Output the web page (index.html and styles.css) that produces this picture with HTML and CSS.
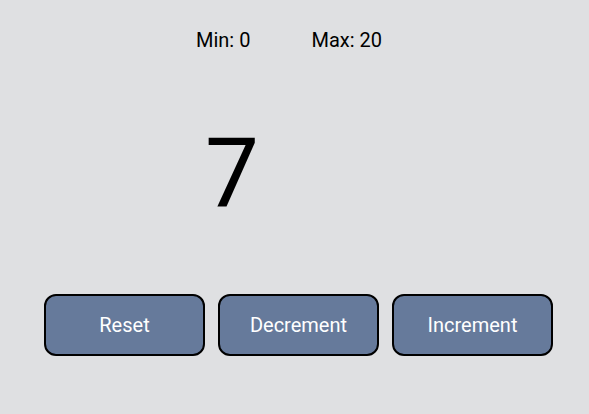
FILE: index.html
```html
<!DOCTYPE html>
<html>
<head>
<meta charset="utf-8">
<link rel="stylesheet" href="styles.css">
</head>
<body>
<div class="app">
  <div class="limits">
    <span class="limit">Min: 0</span>
    <span class="limit">Max: 20</span>
  </div>
  <div class="count">7</div>
  <div class="controls">
    <button class="btn">Reset</button>
    <button class="btn">Decrement</button>
    <button class="btn">Increment</button>
  </div>
</div>
</body>
</html>
```
FILE: styles.css
```css
html, body {
  margin: 0;
  padding: 0;
  background: #dfe0e2;
  font-family: Roboto, "Liberation Sans", sans-serif;
}
.app {
  width: 589px;
  height: 414px;
  display: flex;
  flex-direction: column;
}
.limits {
  display: flex;
  gap: 61px;
  padding-top: 28px;
  padding-left: 196px;
  font-size: 20px;
  color: #000;
}
.count {
  margin-top: 66px;
  padding-left: 205px;
  font-size: 96px;
  line-height: normal;
  color: #000;
}
.controls {
  display: flex;
  gap: 13px;
  margin-top: 64px;
  padding-left: 44px;
}
.btn {
  width: 161px;
  height: 62px;
  box-sizing: border-box;
  border: 2px solid #000;
  border-radius: 12px;
  background: #667a9b;
  color: #fff;
  font-family: Roboto, "Liberation Sans", sans-serif;
  font-size: 20px;
  padding: 0;
  margin: 0;
}
```
